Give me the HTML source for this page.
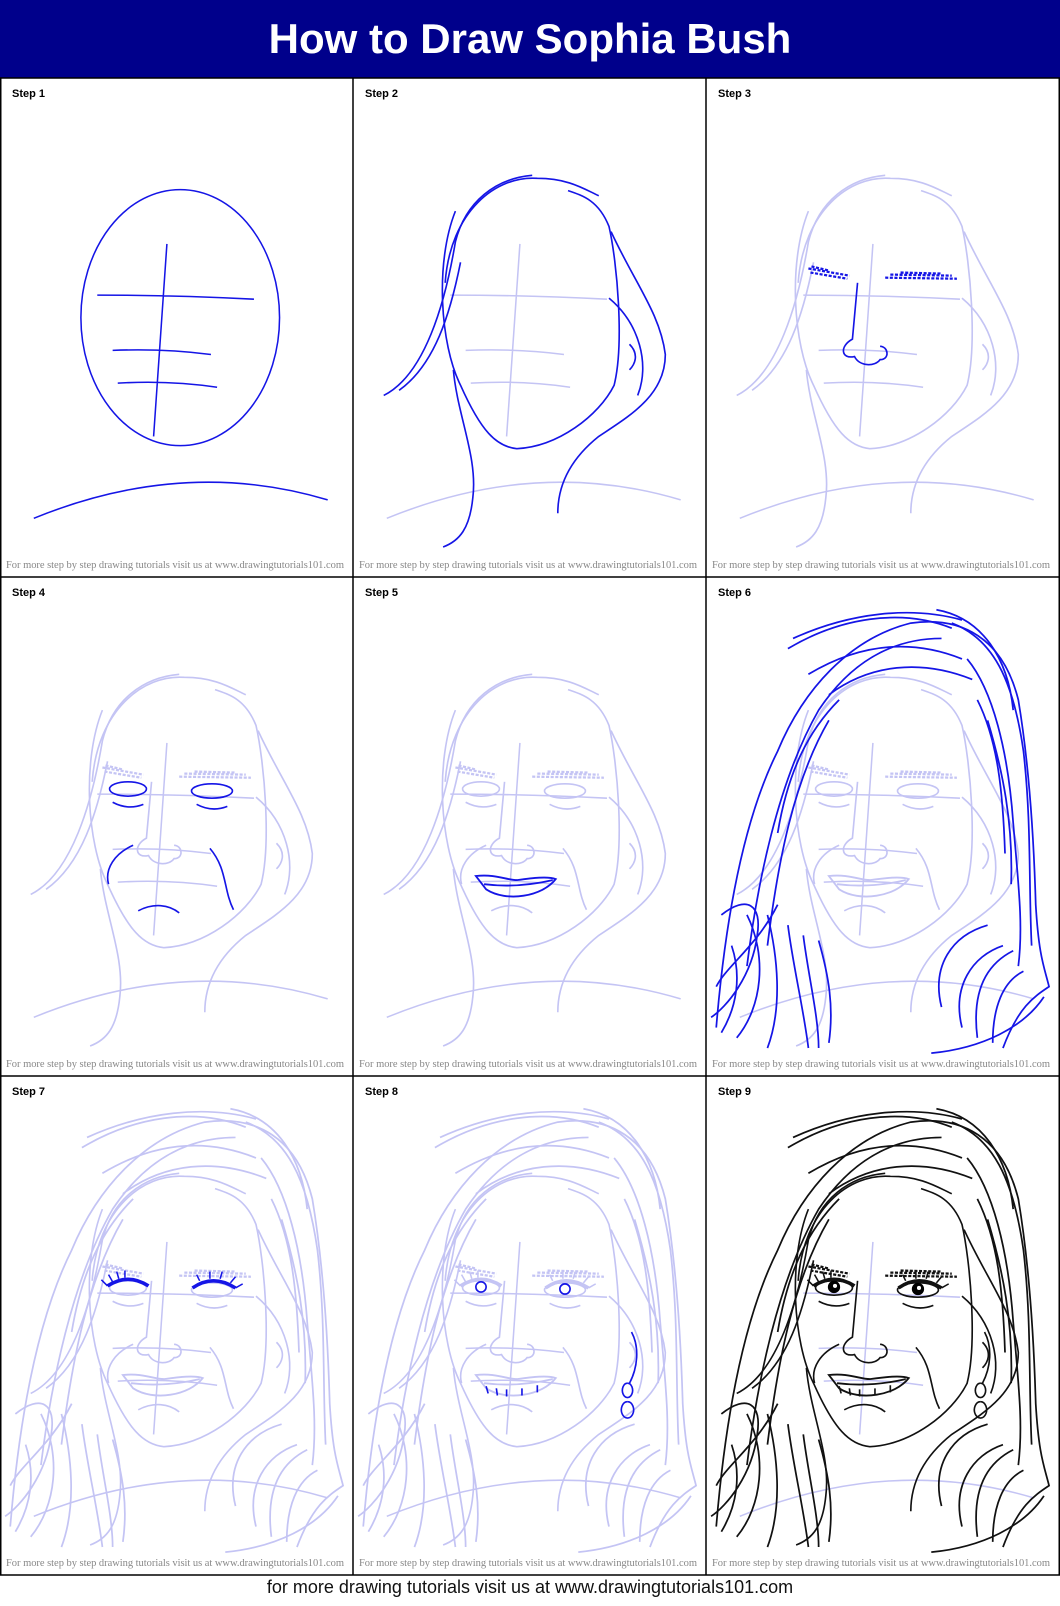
<!DOCTYPE html>
<html><head><meta charset="utf-8"><style>
html,body{margin:0;padding:0;background:#fff}
body{width:1060px;height:1606px;overflow:hidden;position:relative;font-family:"Liberation Sans",sans-serif}
.hdr{position:absolute;left:0;top:0;width:1060px;height:78px;background:#00008b;color:#fff;text-align:center;font:bold 42px/78px "Liberation Sans",sans-serif}
svg{position:absolute;left:0;top:0}
.ft{position:absolute;left:0;top:1577px;width:1060px;text-align:center;font:18px "Liberation Sans",sans-serif;color:#111}
</style></head><body>
<div class="hdr">How to Draw Sophia Bush</div>
<svg width="1060" height="1606" viewBox="0 0 1060 1606">
<defs>
<clipPath id="pc"><rect x="1" y="1" width="335" height="474"/></clipPath>
<g id="guides" fill="none" stroke="currentColor" stroke-width="1.5">
<path d="M163 162 L150 350 M95 212 Q170 212 248 216 M110 266 Q160 264 206 270 M115 298 Q165 295 212 302"/>
<path d="M33 430 Q180 370 320 412"/>
</g>
<g id="oval" fill="none" stroke="currentColor" stroke-width="1.5"><ellipse cx="176" cy="234" rx="97" ry="125"/></g>
<g id="face" fill="none" stroke="currentColor" stroke-width="1.6">
<path d="M100 130 C80 180 85 260 105 300 C125 345 140 360 160 362 C200 360 240 330 255 300 C265 260 258 180 250 145 C240 120 225 115 210 110"/>
<path d="M90 200 C95 130 140 95 180 98 C210 98 225 108 240 115"/>
<path d="M30 310 C70 290 90 220 100 160 C110 120 140 98 175 95 M45 305 C80 280 95 230 105 180"/>
<path d="M98 285 C102 330 122 370 117 410 C114 440 104 452 88 458"/>
<path d="M252 150 C275 200 300 230 305 270 C305 310 270 330 240 350 C215 370 200 395 200 425"/>
<path d="M250 215 C280 240 290 280 278 310 M270 260 C280 270 275 280 270 285"/>
</g>
<g id="brows" fill="none" stroke="currentColor" stroke-width="1.6">
<path d="M100 186 L140 193 M102 190 L138 196 M103 184 L120 188 M175 195 L245 196 M180 192 L240 193 M190 190 L230 191" stroke-dasharray="3 1.5" stroke-width="2.2"/>
<path d="M148 200 L143 255 C130 262 132 275 145 272 C150 282 165 282 170 275 C180 275 178 262 170 262"/>
</g>
<g id="eyes" fill="none" stroke="currentColor" stroke-width="1.6">
<ellipse cx="125" cy="207" rx="18" ry="7"/><ellipse cx="207" cy="209" rx="20" ry="7"/>
<path d="M110 220 Q125 228 140 222 M192 222 Q207 230 222 224"/>
<path d="M130 262 C112 270 102 285 106 300 M205 265 C222 285 218 305 228 325 M135 326 C150 318 165 320 175 328"/>
</g>
<g id="mouth" fill="none" stroke="currentColor" stroke-width="1.8">
<path d="M120 292 C140 290 150 296 160 296 C175 294 190 292 198 295 C185 312 150 318 130 305 Z M128 300 Q160 304 195 296"/>
</g>
<g id="hair" fill="none" stroke="currentColor" stroke-width="1.7">
<path d="M10 440 C20 320 40 230 70 170 C95 110 140 60 200 45 C250 38 290 60 305 120 C315 180 320 250 322 320 C325 370 330 380 335 400 C320 410 305 420 290 460"/>
<path d="M40 380 C50 300 70 200 110 130 C140 85 180 60 230 60 M60 360 C70 280 85 200 120 140 M80 70 C130 40 190 30 240 50 M100 95 C150 65 200 60 250 80 M120 115 C160 85 210 80 260 100 M70 250 C80 190 100 150 130 120 M85 60 C140 35 200 28 250 42"/>
<path d="M240 45 C280 60 300 100 310 170 C318 240 315 300 318 360 M255 80 C280 110 295 170 300 240 C305 300 310 340 305 380 M265 120 C285 160 290 210 292 270 M225 32 C270 40 295 80 300 130 M275 140 C290 190 300 240 298 300"/>
<path d="M15 330 C40 310 55 320 50 350 C45 390 20 420 5 430 M40 330 C60 370 55 420 30 450 M60 330 C70 370 75 420 60 460 M80 340 C85 380 95 420 100 460 M95 350 C100 390 110 430 110 460 M70 320 C50 360 20 380 10 400 M25 360 C35 390 30 420 15 445 M110 355 C120 390 125 420 120 455"/>
<path d="M230 420 C220 380 240 350 275 340 M250 440 C240 400 260 370 290 360 M220 465 C270 460 310 440 330 410 M265 450 C260 410 270 380 300 365 M280 455 C280 420 290 395 310 385"/>
</g>
<g id="lash" fill="none" stroke="currentColor" stroke-width="2">
<path d="M105 205 Q125 192 145 205 M188 207 Q208 193 230 207" stroke-width="3.5"/>
<path d="M105 205 l-6 -6 M110 201 l-4 -7 M116 198 l-2 -7 M122 197 l0 -7 M195 200 l-3 -6 M205 198 l0 -7 M215 198 l2 -7 M225 202 l5 -6 M230 207 l7 -4" stroke-width="1.5"/>
</g>
<g id="iris" fill="none" stroke="currentColor" stroke-width="1.6">
<circle cx="125" cy="206" r="5"/><circle cx="207" cy="208" r="5"/>
<path d="M272 250 C280 265 278 285 270 300 M268 300 a5 7 0 1 0 0.1 0 M268 318 a6 8 0 1 0 0.1 0"/>
<path d="M130 303 L132 310 M140 305 L141 312 M150 306 L150 313 M165 305 L165 312 M180 302 L180 309"/>
</g>
<g id="iris9">
<circle cx="125" cy="206" r="6" fill="#000"/><circle cx="207" cy="208" r="6" fill="#000"/>
<circle cx="126" cy="205" r="2" fill="#fff"/><circle cx="208" cy="207" r="2" fill="#fff"/>
</g>
</defs>
<g fill="none" stroke="#000" stroke-width="1.5">
<rect x="0.75" y="78" width="1058.5" height="1497"/>
<path d="M353 78 V1575 M706 78 V1575 M0 577 H1060 M0 1076 H1060"/>
</g>
<g font-family="Liberation Sans, sans-serif" font-size="11" font-weight="bold" fill="#000">
<text x="12" y="97">Step 1</text><text x="365" y="97">Step 2</text><text x="718" y="97">Step 3</text>
<text x="12" y="596">Step 4</text><text x="365" y="596">Step 5</text><text x="718" y="596">Step 6</text>
<text x="12" y="1095">Step 7</text><text x="365" y="1095">Step 8</text><text x="718" y="1095">Step 9</text>
</g>
<g font-family="Liberation Serif, serif" font-size="10.5" fill="#888" textLength="338">
<text x="6" y="568" textLength="338">For more step by step drawing tutorials visit us at www.drawingtutorials101.com</text>
<text x="359" y="568" textLength="338">For more step by step drawing tutorials visit us at www.drawingtutorials101.com</text>
<text x="712" y="568" textLength="338">For more step by step drawing tutorials visit us at www.drawingtutorials101.com</text>
<text x="6" y="1067" textLength="338">For more step by step drawing tutorials visit us at www.drawingtutorials101.com</text>
<text x="359" y="1067" textLength="338">For more step by step drawing tutorials visit us at www.drawingtutorials101.com</text>
<text x="712" y="1067" textLength="338">For more step by step drawing tutorials visit us at www.drawingtutorials101.com</text>
<text x="6" y="1566" textLength="338">For more step by step drawing tutorials visit us at www.drawingtutorials101.com</text>
<text x="359" y="1566" textLength="338">For more step by step drawing tutorials visit us at www.drawingtutorials101.com</text>
<text x="712" y="1566" textLength="338">For more step by step drawing tutorials visit us at www.drawingtutorials101.com</text>
</g>
<g transform="translate(0,78) scale(1.024)" style="color:#1515e6" clip-path="url(#pc)"><use href="#oval"/><use href="#guides"/></g>
<g transform="translate(353,78) scale(1.024)" clip-path="url(#pc)"><use href="#guides" style="color:#c4c4f4"/><use href="#face" style="color:#1515e6"/></g>
<g transform="translate(706,78) scale(1.024)" style="color:#c4c4f4" clip-path="url(#pc)"><use href="#guides"/><use href="#face"/><use href="#brows" style="color:#1515e6"/></g>
<g transform="translate(0,577) scale(1.024)" style="color:#c4c4f4" clip-path="url(#pc)"><use href="#guides"/><use href="#face"/><use href="#brows"/><use href="#eyes" style="color:#1515e6"/></g>
<g transform="translate(353,577) scale(1.024)" style="color:#c4c4f4" clip-path="url(#pc)"><use href="#guides"/><use href="#face"/><use href="#brows"/><use href="#eyes"/><use href="#mouth" style="color:#1515e6"/></g>
<g transform="translate(706,577) scale(1.024)" style="color:#c4c4f4" clip-path="url(#pc)"><use href="#guides"/><use href="#face"/><use href="#brows"/><use href="#eyes"/><use href="#mouth"/><use href="#hair" style="color:#1515e6"/></g>
<g transform="translate(0,1076) scale(1.024)" style="color:#c4c4f4" clip-path="url(#pc)"><use href="#guides"/><use href="#face"/><use href="#brows"/><use href="#eyes"/><use href="#mouth"/><use href="#hair"/><use href="#lash" style="color:#1515e6"/></g>
<g transform="translate(353,1076) scale(1.024)" style="color:#c4c4f4" clip-path="url(#pc)"><use href="#guides"/><use href="#face"/><use href="#brows"/><use href="#eyes"/><use href="#mouth"/><use href="#hair"/><use href="#lash"/><use href="#iris" style="color:#1515e6"/></g>
<g transform="translate(706,1076) scale(1.024)" clip-path="url(#pc)"><use href="#guides" style="color:#c4c4f4"/><g style="color:#111"><use href="#face"/><use href="#brows"/><use href="#eyes"/><use href="#mouth"/><use href="#hair"/><use href="#lash"/><use href="#iris"/><use href="#iris9"/></g></g>
</svg>
<div class="ft">for more drawing tutorials visit us at www.drawingtutorials101.com</div>
</body></html>
